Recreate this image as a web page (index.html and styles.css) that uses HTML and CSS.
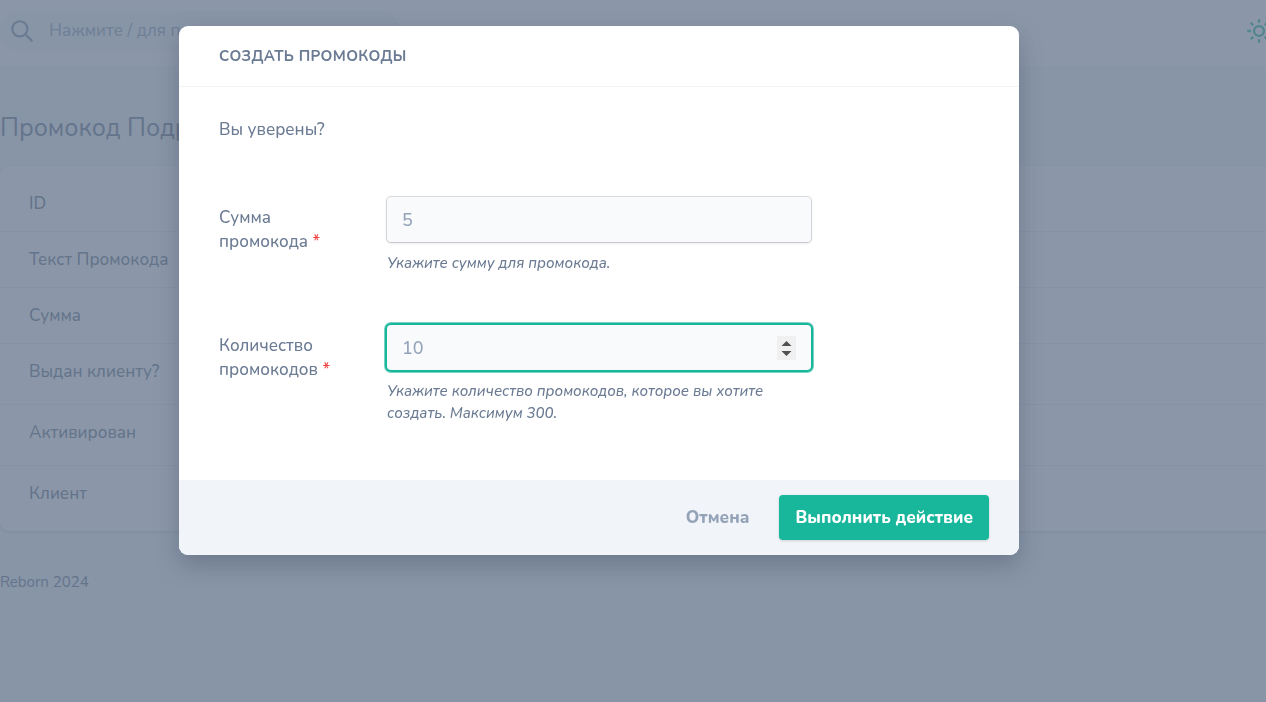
FILE: index.html
```html
<!DOCTYPE html>
<html lang="ru">
<head>
<meta charset="utf-8">
<meta name="viewport" content="width=device-width, initial-scale=1">
<title>Создать промокоды</title>
<link rel="stylesheet" href="styles.css">
</head>
<body>
<div class="page">
  <header class="topbar">
    <label class="search">
      <svg class="search-icon" viewBox="0 0 24 24" aria-hidden="true"><path d="M21 21l-6-6m2-5a7 7 0 11-14 0 7 7 0 0114 0z"/></svg>
      <input class="search-input" type="search" placeholder="Нажмите / для поиска" aria-label="Поиск">
    </label>
    <button class="theme-button" type="button" aria-label="Тема">
      <svg class="theme-icon" viewBox="0 0 24 24" aria-hidden="true"><path d="M12 2v3m0 14v3m10-10h-3M5 12H2m17.07 7.07l-2.12-2.12M7.05 7.05L4.93 4.93m14.14 0l-2.12 2.12M7.05 16.95l-2.12 2.12M16.2 12a4.2 4.2 0 11-8.4 0 4.2 4.2 0 018.4 0z"/></svg>
    </button>
  </header>
  <main class="content">
    <h1 class="page-title">Промокод Подробности</h1>
    <dl class="card">
      <dt class="row">ID</dt>
      <dt class="row">Текст Промокода</dt>
      <dt class="row">Сумма</dt>
      <dt class="row row-tall">Выдан клиенту?</dt>
      <dt class="row row-tall">Активирован</dt>
      <dt class="row">Клиент</dt>
    </dl>
  </main>
  <footer class="page-footer">Reborn 2024</footer>
</div>
<div class="overlay">
  <form class="modal" role="dialog" aria-labelledby="modal-title">
    <h2 class="modal-title" id="modal-title">Создать промокоды</h2>
    <div class="modal-body">
      <p class="confirm">Вы уверены?</p>
      <div class="field">
        <label class="field-label" for="amount">Сумма промокода <span class="required">*</span></label>
        <div class="field-control">
          <input class="field-input" id="amount" type="number" placeholder="5">
          <p class="help">Укажите сумму для промокода.</p>
        </div>
      </div>
      <div class="field">
        <label class="field-label" for="count">Количество промокодов <span class="required">*</span></label>
        <div class="field-control">
          <input class="field-input is-active" id="count" type="number" max="300" placeholder="10">
          <p class="help">Укажите количество промокодов, которое вы хотите создать. Максимум 300.</p>
        </div>
      </div>
    </div>
    <div class="modal-footer">
      <button class="cancel-button" type="button">Отмена</button>
      <button class="submit-button" type="submit">Выполнить действие</button>
    </div>
  </form>
</div>
</body>
</html>
```
FILE: styles.css
```css
* {
  box-sizing: border-box;
}

body,
h1,
h2,
p,
dl {
  margin: 0;
}

body {
  background: #f1f5f9;
  color: #64748b;
  font-family: Nunito, "Open Sans", sans-serif;
  font-size: 17px;
  font-weight: 500;
  line-height: 24px;
}

button,
input {
  font: inherit;
}

.page {
  min-height: 100vh;
  overflow: hidden;
}

.topbar {
  display: flex;
  align-items: center;
  justify-content: space-between;
  height: 66px;
  padding-bottom: 4px;
  background: #fff;
}

.search {
  display: flex;
  align-items: center;
  gap: 14px;
  width: 400px;
  height: 40px;
  padding: 0 9px;
  border-radius: 20px;
  background: #f1f5f9;
}

.search-icon,
.theme-icon {
  display: block;
  fill: none;
  stroke: currentColor;
}

.search-icon {
  flex: none;
  width: 26px;
  height: 26px;
  stroke-width: 2;
  stroke-linecap: round;
  color: #7c8ba1;
}

.search-input {
  flex: 1;
  min-width: 0;
  height: 24px;
  padding: 0;
  border: 0;
  background: none;
}

.search-input::placeholder {
  color: #94a3b8;
  opacity: 1;
}

.theme-button {
  margin-right: -7px;
  padding: 0;
  border: 0;
  background: none;
  color: #18b69b;
}

.theme-icon {
  width: 28px;
  height: 28px;
  stroke-width: 2;
}

.page-title {
  padding: 45px 0 20px;
  font-size: 25px;
  font-weight: 400;
  line-height: 35px;
}

.card {
  margin-right: -40px;
  padding: 10px 0 9px;
  border-radius: 9px;
  background: #fff;
  box-shadow: 0 1px 3px rgba(0, 0, 0, .15);
}

.row {
  min-height: 56px;
  padding: 16px 29px 15px;
  border-bottom: 1px solid #e9eef4;
}

.row-tall {
  min-height: 61px;
}

.row:last-child {
  border-bottom: 0;
}

.page-footer {
  padding-top: 39px;
  font-size: 15px;
  font-weight: 400;
}

.overlay {
  position: fixed;
  inset: 0;
  padding: 26px 68px 26px 0;
  background: rgba(100, 116, 139, .75);
  overflow: auto;
}

.modal {
  max-width: 840px;
  margin: 0 auto;
  border-radius: 9px;
  background: #fff;
  color: #6b7b93;
  box-shadow: 0 10px 24px rgba(30, 41, 59, .25);
  overflow: hidden;
}

.modal-title {
  padding: 18px 40px;
  border-bottom: 1px solid #f1f5f9;
  font-size: 15px;
  font-weight: 700;
  letter-spacing: 0.025em;
  text-transform: uppercase;
}

.modal-body {
  padding: 31px 0 33px;
}

.confirm {
  margin-bottom: 27px;
  padding: 0 40px;
}

.field {
  display: flex;
  padding: 28px 0 23px;
}

.field-label {
  width: 20%;
  padding: 9px 0 0 40px;
}

.required {
  color: #ef4444;
}

.field-control {
  width: 60%;
  padding: 0 40px;
}

.field-input {
  display: block;
  width: 100%;
  height: 45px;
  padding: 0 15px;
  border: 0;
  border-radius: 4px;
  outline: 0;
  background: #f8fafc;
  color: #64748b;
  font-size: 18px;
  box-shadow: 0 0 0 1px rgba(30, 41, 59, .15), 0 1px 3px rgba(0, 0, 0, .15);
}

.field-input::placeholder {
  color: #94a3b8;
  opacity: 1;
}

.is-active {
  box-shadow: 0 0 0 2px #18b69b, 0 0 0 3px rgba(24, 182, 155, .6);
}

.is-active::-webkit-inner-spin-button {
  appearance: none;
  width: 19px;
  height: 24px;
  opacity: 1;
  background: #f0f0f0 url("data:image/svg+xml,%3Csvg xmlns='http://www.w3.org/2000/svg' viewBox='0 0 19 24'%3E%3Cpath fill='%23505050' d='M4.5 10h10l-5-5zM4.5 15h10l-5 5z'/%3E%3C/svg%3E");
}

.help {
  margin-top: 10px;
  font-size: 15px;
  font-style: italic;
  line-height: 22px;
}

.modal-footer {
  display: flex;
  justify-content: flex-end;
  gap: 14px;
  padding: 15px 30px;
  background: #f1f5f9;
}

.cancel-button,
.submit-button {
  height: 45px;
  padding: 0 16px;
  border: 0;
  border-radius: 4px;
  font-weight: 800;
}

.cancel-button {
  background: none;
  color: #94a3b8;
}

.submit-button {
  background: #18b69b;
  color: #fff;
  box-shadow: 0 1px 3px rgba(0, 0, 0, .15);
}
```
